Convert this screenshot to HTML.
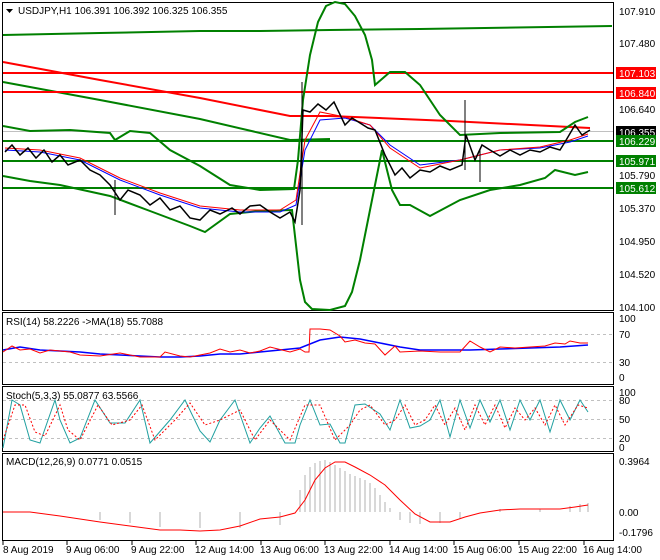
<!DOCTYPE html>
<html><head><style>
body{margin:0;background:#fff;width:660px;height:560px;overflow:hidden;font-family:"Liberation Sans",sans-serif}
svg{position:absolute;left:0;top:0}
text{font-family:"Liberation Sans",sans-serif;font-size:10px}
</style></head><body>
<svg width="660" height="560" viewBox="0 0 660 560">
<rect width="660" height="560" fill="#fff"/>
<g fill="none" stroke="#000" stroke-width="1">
<rect x="2.5" y="2.5" width="611" height="308"/>
<rect x="2.5" y="312.5" width="611" height="72"/>
<rect x="2.5" y="386.5" width="611" height="65"/>
<rect x="2.5" y="453.5" width="611" height="87"/>
</g>
<line x1="3" y1="131.5" x2="613" y2="131.5" stroke="#c0c0c0"/>
<polyline points="3,35 100,33 200,31 260,31 330,30 420,29 612,26" fill="none" stroke="#008000" stroke-width="2"/>
<polyline points="3,62 100,80 200,98 290,116 330,116 450,121 590,128" fill="none" stroke="#f00" stroke-width="2"/>
<polyline points="3,82 100,100 200,119 290,140 330,139" fill="none" stroke="#008000" stroke-width="2"/>
<line x1="3" y1="73" x2="613" y2="73" stroke="#f00" stroke-width="2"/>
<line x1="3" y1="92" x2="613" y2="92" stroke="#f00" stroke-width="2"/>
<line x1="3" y1="141" x2="613" y2="141" stroke="#008000" stroke-width="2"/>
<line x1="3" y1="161" x2="613" y2="161" stroke="#008000" stroke-width="2"/>
<line x1="3" y1="188" x2="613" y2="188" stroke="#008000" stroke-width="2"/>
<polyline points="3,126 30,131 70,130 110,133 115,140 130,131 150,133 170,150 200,166 230,185 260,190 294,189 298,160 303,100 310,55 318,22 326,6 335,2 345,4 355,16 365,35 372,60 375,85 390,72 405,72 420,85 440,115 460,135 500,133 560,132 575,122 588,117" fill="none" stroke="#008000" stroke-width="2"/>
<polyline points="3,176 30,181 60,185 110,196 150,211 190,226 205,232 230,214 260,211 292,210 296,245 300,280 305,302 312,309 330,310 345,306 352,292 360,260 368,220 376,180 382,150 392,190 400,205 410,205 430,216 460,200 490,190 520,185 545,178 555,170 575,175 588,172" fill="none" stroke="#008000" stroke-width="2"/>
<polyline points="5,150 40,152 80,160 120,180 160,195 200,208 240,212 280,212 296,205 305,150 320,120 345,118 370,125 390,145 420,165 460,160 500,150 540,148 570,142 588,136" fill="none" stroke="#00f" stroke-width="1"/>
<polyline points="5,148 40,150 80,158 120,178 160,193 200,206 240,210 280,210 296,200 305,140 320,112 345,117 370,125 390,148 420,168 460,160 500,150 540,147 570,140 588,134" fill="none" stroke="#f00" stroke-width="1"/>
<polyline points="5,152 12,145 20,155 28,148 36,158 44,150 52,162 60,155 68,165 80,160 90,170 100,175 110,185 120,200 128,190 140,195 150,205 160,198 170,210 180,206 190,218 200,220 210,210 220,214 232,208 240,214 250,206 260,205 270,212 280,218 290,212 295,222 300,190 303,110 310,112 318,104 326,110 334,102 345,125 352,118 360,123 368,128 375,130 385,155 395,175 402,168 410,178 420,170 430,172 440,166 450,170 462,165 466,135 475,160 482,145 490,150 500,156 510,150 520,155 530,150 540,152 550,147 560,150 565,142 575,125 582,135 590,130" fill="none" stroke="#000" stroke-width="1.5"/>
<g stroke="#000" stroke-width="1">
<line x1="302" y1="82" x2="302" y2="225"/><line x1="115" y1="180" x2="115" y2="215"/><line x1="465" y1="100" x2="465" y2="170"/><line x1="480" y1="150" x2="480" y2="182"/>
</g>
<g fill="#000">
<text x="619" y="15">107.910</text><text x="619" y="47">107.480</text><text x="619" y="113">106.640</text><text x="619" y="179">105.790</text><text x="619" y="212">105.370</text><text x="619" y="245">104.950</text><text x="619" y="278">104.520</text><text x="619" y="311">104.100</text>
</g>
<rect x="616" y="67" width="40" height="12" fill="#f00"/><text x="619" y="77" fill="#fff">107.103</text>
<rect x="616" y="87" width="40" height="12" fill="#f00"/><text x="619" y="97" fill="#fff">106.840</text>
<rect x="616" y="126" width="40" height="12" fill="#000"/><text x="619" y="136" fill="#fff">106.355</text>
<rect x="616" y="135" width="40" height="12" fill="#008000"/><text x="619" y="145" fill="#fff">106.229</text>
<rect x="616" y="155" width="40" height="12" fill="#008000"/><text x="619" y="165" fill="#fff">105.971</text>
<rect x="616" y="182" width="40" height="12" fill="#008000"/><text x="619" y="192" fill="#fff">105.612</text>
<path d="M6,9 L13,9 L9.5,13 Z" fill="#000"/>
<text x="18" y="14" fill="#000">USDJPY,H1  106.391 106.392 106.325 106.355</text>
<line x1="3" y1="334.5" x2="613" y2="334.5" stroke="#c0c0c0" stroke-dasharray="3,3"/>
<line x1="3" y1="362.5" x2="613" y2="362.5" stroke="#c0c0c0" stroke-dasharray="3,3"/>
<polyline points="3,350 20,347 40,350 60,351 80,352 100,354 120,355 140,356 160,357 180,357 200,356 220,354 240,354 260,352 280,350 300,348 320,340 340,337 360,339 380,343 400,347 420,350 440,350 470,350 500,349 530,348 560,347 588,345" fill="none" stroke="#00f" stroke-width="1.5"/>
<polyline points="3,352 12,346 20,350 30,349 40,353 50,350 70,352 80,355 100,356 120,353 140,357 160,357 165,352 180,356 190,357 200,355 210,353 220,349 230,352 240,350 250,353 260,351 270,347 290,352 300,349 305,352 309,352 310,329 320,329 330,330 340,336 345,342 355,340 365,343 375,344 385,355 395,346 400,352 420,351 440,352 460,352 470,341 480,347 490,352 500,347 515,348 530,347 545,346 555,343 565,344 570,341 580,343 588,343" fill="none" stroke="#f00" stroke-width="1"/>
<text x="6" y="325" fill="#000">RSI(14) 58.2226  -&gt;MA(18) 55.7088</text>
<g fill="#000"><text x="619" y="322">100</text><text x="619" y="338">70</text><text x="619" y="366">30</text><text x="619" y="381">0</text></g>
<line x1="3" y1="400.5" x2="613" y2="400.5" stroke="#c0c0c0" stroke-dasharray="3,3"/>
<line x1="3" y1="419.5" x2="613" y2="419.5" stroke="#c0c0c0" stroke-dasharray="3,3"/>
<line x1="3" y1="438.5" x2="613" y2="438.5" stroke="#c0c0c0" stroke-dasharray="3,3"/>
<polyline points="3,448 12,400 20,405 30,440 40,443 55,400 60,420 70,443 80,438 95,400 110,423 125,423 140,400 150,443 170,420 185,400 200,431 210,442 220,420 235,400 250,443 260,428 270,416 285,443 295,443 300,425 310,400 320,425 330,424 340,443 345,443 355,405 365,404 380,414 390,430 400,400 410,428 420,426 430,420 440,400 450,437 460,400 470,428 480,400 490,422 500,400 510,430 520,400 530,420 540,400 550,432 560,400 570,420 580,400 588,412" fill="none" stroke="#20a0a0" stroke-width="1"/>
<polyline points="3,440 15,405 25,405 35,432 45,436 60,405 68,430 80,440 98,405 112,425 130,420 142,405 155,440 175,420 190,403 205,425 220,420 240,410 255,440 270,420 290,440 305,405 320,405 335,440 350,425 360,410 370,405 385,425 395,420 405,405 415,425 425,420 435,405 445,425 455,408 465,430 475,405 485,425 495,405 505,428 515,408 525,420 535,408 545,425 555,405 565,425 578,405 588,408" fill="none" stroke="#f00" stroke-width="1" stroke-dasharray="2,2"/>
<text x="6" y="399" fill="#000">Stoch(5,3,3) 55.0877 63.5566</text>
<g fill="#000"><text x="619" y="396">100</text><text x="619" y="404">80</text><text x="619" y="423">50</text><text x="619" y="442">20</text><text x="619" y="451">0</text></g>
<g stroke="#b0b0b0" stroke-width="1">
<line x1="100" y1="512" x2="100" y2="520"/><line x1="130" y1="512" x2="130" y2="523"/><line x1="160" y1="512" x2="160" y2="527"/><line x1="200" y1="512" x2="200" y2="528"/><line x1="240" y1="512" x2="240" y2="528"/><line x1="280" y1="512" x2="280" y2="525"/>
<line x1="300" y1="512" x2="300" y2="490"/><line x1="305" y1="512" x2="305" y2="475"/><line x1="310" y1="512" x2="310" y2="467"/><line x1="315" y1="512" x2="315" y2="463"/><line x1="320" y1="512" x2="320" y2="461"/><line x1="325" y1="512" x2="325" y2="460"/><line x1="330" y1="512" x2="330" y2="462"/><line x1="335" y1="512" x2="335" y2="465"/><line x1="340" y1="512" x2="340" y2="468"/><line x1="345" y1="512" x2="345" y2="471"/><line x1="350" y1="512" x2="350" y2="474"/><line x1="355" y1="512" x2="355" y2="476"/><line x1="360" y1="512" x2="360" y2="478"/><line x1="365" y1="512" x2="365" y2="480"/><line x1="370" y1="512" x2="370" y2="483"/><line x1="375" y1="512" x2="375" y2="488"/><line x1="380" y1="512" x2="380" y2="495"/><line x1="385" y1="512" x2="385" y2="502"/><line x1="390" y1="512" x2="390" y2="508"/>
<line x1="400" y1="512" x2="400" y2="520"/><line x1="410" y1="512" x2="410" y2="523"/><line x1="420" y1="512" x2="420" y2="524"/><line x1="440" y1="512" x2="440" y2="523"/><line x1="460" y1="512" x2="460" y2="519"/>
<line x1="500" y1="512" x2="500" y2="509"/><line x1="540" y1="512" x2="540" y2="509"/><line x1="570" y1="512" x2="570" y2="506"/><line x1="580" y1="512" x2="580" y2="504"/><line x1="588" y1="512" x2="588" y2="503"/>
</g>
<polyline points="3,512 30,512 60,516 80,519 100,522 130,526 160,530 180,530 200,531 220,530 240,526 260,519 280,517 295,513 305,500 315,480 325,468 335,462 345,462 355,467 370,475 385,485 400,500 415,514 430,522 450,522 465,517 480,513 500,510 520,509 540,509 560,509 575,507 588,505" fill="none" stroke="#f00" stroke-width="1"/>
<text x="6" y="465" fill="#000">MACD(12,26,9) 0.0771 0.0515</text>
<g fill="#000"><text x="619" y="465">0.3964</text><text x="619" y="516">0.00</text><text x="619" y="536">-0.1796</text></g>
<g stroke="#000"><line x1="3" y1="541" x2="3" y2="545"/><line x1="67" y1="541" x2="67" y2="545"/><line x1="132" y1="541" x2="132" y2="545"/><line x1="196" y1="541" x2="196" y2="545"/><line x1="261" y1="541" x2="261" y2="545"/><line x1="325" y1="541" x2="325" y2="545"/><line x1="390" y1="541" x2="390" y2="545"/><line x1="454" y1="541" x2="454" y2="545"/><line x1="519" y1="541" x2="519" y2="545"/><line x1="584" y1="541" x2="584" y2="545"/></g>
<g fill="#000"><text x="3" y="553">8 Aug 2019</text><text x="66" y="553">9 Aug 06:00</text><text x="131" y="553">9 Aug 22:00</text><text x="195" y="553">12 Aug 14:00</text><text x="260" y="553">13 Aug 06:00</text><text x="324" y="553">13 Aug 22:00</text><text x="389" y="553">14 Aug 14:00</text><text x="453" y="553">15 Aug 06:00</text><text x="518" y="553">15 Aug 22:00</text><text x="583" y="553">16 Aug 14:00</text></g>
</svg>
</body></html>
